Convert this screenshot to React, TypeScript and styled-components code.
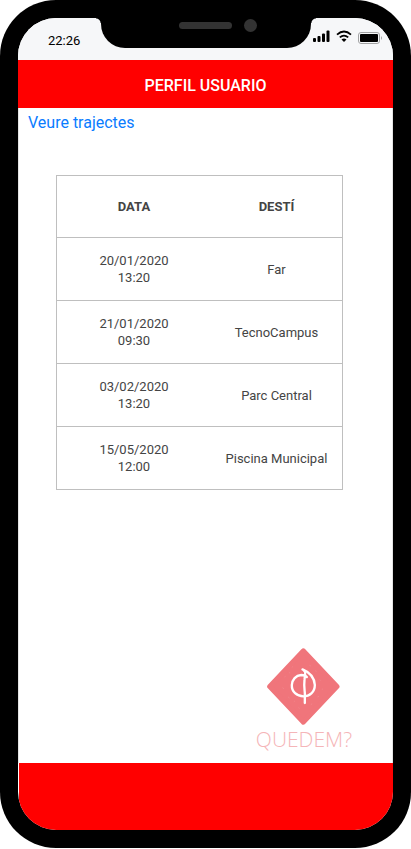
import React from "react";
import styled, { createGlobalStyle } from "styled-components";

const GlobalStyle = createGlobalStyle`
  * { box-sizing: border-box; }
  body { margin: 0; background: #fff; font-family: Roboto, "Liberation Sans", sans-serif; }
`;

const Phone = styled.div`
  display: flex;
  flex-direction: column;
  min-height: calc(100vh - 1px);
  padding: 18px;
  background: #000;
  border-radius: 56px;
`;

const Screen = styled.div`
  flex: 1;
  display: flex;
  flex-direction: column;
  background: #fff;
  border-radius: 38px;
  overflow: hidden;
`;

const StatusBar = styled.div`
  display: grid;
  grid-template-columns: 1fr 210px 1fr;
  height: 42px;
  background: #f6f7f9;
`;

const Clock = styled.time`
  padding: 15px 0 0 30px;
  font-size: 13px;
  line-height: 16px;
  color: #000;
`;

const Notch = styled.div`
  position: relative;
  display: flex;
  justify-content: center;
  height: 30px;
  background: #000;
  border-radius: 0 0 24px 24px;

  &::before,
  &::after {
    content: "";
    position: absolute;
    top: 0;
    width: 5px;
    height: 5px;
  }
  &::before {
    right: 100%;
    background: radial-gradient(circle at 0 100%, transparent 4px, #000 5px);
  }
  &::after {
    left: 100%;
    background: radial-gradient(circle at 100% 100%, transparent 4px, #000 5px);
  }
`;

const Speaker = styled.span`
  width: 53px;
  height: 7px;
  margin: 4px 12px 0 25px;
  border-radius: 4px;
  background: #333;
`;

const Camera = styled.span`
  width: 13px;
  height: 13px;
  margin-top: 1px;
  border-radius: 50%;
  background: #333;
`;

const Indicators = styled.div`
  display: flex;
  align-items: flex-start;
  gap: 6px;
  padding: 12px 0 0 2px;
`;

const TitleBar = styled.header`
  display: flex;
  align-items: center;
  justify-content: center;
  height: 48px;
  padding-top: 4px;
  background: #f00;
`;

const Title = styled.h1`
  margin: 0;
  font-size: 16px;
  font-weight: 500;
  line-height: 20px;
  color: #fff;
`;

const Content = styled.main`
  flex: 1;
  display: flex;
  flex-direction: column;
  align-items: flex-start;
  border: 0 solid #e4e4e4;
  border-width: 0 1px;
  padding: 5px 40px 10px 9px;
`;

const TripsLink = styled.a`
  font-size: 16px;
  line-height: 20px;
  color: #0a7cff;
  text-decoration: none;
`;

const Trips = styled.table`
  align-self: stretch;
  margin: 42px 9px 24px 28px;
  border-collapse: collapse;
  table-layout: fixed;
  border: 1px solid #bfbfbf;
  font-size: 13px;
  line-height: 17px;
  color: #444;
  text-align: center;
`;

const Row = styled.tr`
  border-top: 1px solid #bfbfbf;
`;

const HeadCell = styled.th<{ $width: string }>`
  width: ${(p) => p.$width};
  height: 62px;
  padding: 0;
  font-weight: 700;
`;

const Cell = styled.td`
  height: 63px;
  padding: 0;
`;

const Line = styled.span`
  display: block;
`;

const Brand = styled.div`
  display: flex;
  flex-direction: column;
  align-items: center;
  align-self: flex-end;
  margin-top: auto;
`;

const BrandName = styled.span`
  font-family: "Open Sans", "Noto Sans", sans-serif;
  font-size: 21px;
  font-weight: 300;
  line-height: 28px;
  color: #f5b5b8;
`;

const BottomBar = styled.footer`
  height: 67px;
  margin-left: 1px;
  background: #f00;
`;

const SignalIcon = () => (
  <svg width="17" height="12" viewBox="0 0 17 12" aria-hidden="true">
    <rect x="0" y="8" width="3" height="4" rx="1" />
    <rect x="4.5" y="6" width="3" height="6" rx="1" />
    <rect x="9" y="3.5" width="3" height="8.5" rx="1" />
    <rect x="13.5" y="0.5" width="3" height="11.5" rx="1" />
  </svg>
);

const WifiIcon = () => (
  <svg width="16" height="12" viewBox="0 0 16 12" aria-hidden="true">
    <path d="M1 4.6Q8 -1.6 15 4.6M3.8 7.4Q8 3.8 12.2 7.4" fill="none" stroke="#000" strokeWidth="1.8" />
    <path d="M8 12L5.500 9.4Q8 7.6 10.500 9.4Z" />
  </svg>
);

const BatteryIcon = () => (
  <svg width="25" height="14" viewBox="0 0 25 14" aria-hidden="true">
    <rect x="0.5" y="2.5" width="21" height="11" rx="2.5" fill="none" stroke="#a2a3a4" />
    <rect x="2" y="4" width="18" height="8" rx="1" />
    <path d="M23 6Q25 8 23 10Z" fill="#a2a3a4" />
  </svg>
);

const BrandMark = () => (
  <svg width="73" height="77" viewBox="80 37 218 231" aria-hidden="true">
    <path
      d="M188.500 46L289 152.500L188.500 259L88 152.500Z"
      fill="#f0757b"
      stroke="#f0757b"
      strokeWidth="16"
      strokeLinejoin="round"
    />
    <g fill="none" stroke="#fff" strokeLinecap="round" strokeLinejoin="round">
      <path d="M186 101C208 110 222 126 223 148C223 170 207 182 189 182C169 182 153 168 154 148C155 132 166 119 182 118C190 118 196 120 199 124" strokeWidth="7" />
      <path d="M191 105C197 108 193 120 192 132C190 150 192 160 193 172L193 202" strokeWidth="7" />
    </g>
    <path
      d="M132 124L135 122M146 111L149 112M154 95L157 93M207 89L211 91M224 105L228 107M238 132L241 135M126 156L130 159M143 184L147 187M160 198L163 196M211 207L215 204M231 184L235 182M244 161L247 160M174 216L177 218"
      fill="none"
      stroke="#f28d92"
      strokeWidth="2"
    />
  </svg>
);

const trips = [
  { date: "20/01/2020", time: "13:20", place: "Far" },
  { date: "21/01/2020", time: "09:30", place: "TecnoCampus" },
  { date: "03/02/2020", time: "13:20", place: "Parc Central" },
  { date: "15/05/2020", time: "12:00", place: "Piscina Municipal" },
];

export default function App() {
  return (
    <>
      <GlobalStyle />
      <Phone>
        <Screen>
          <StatusBar>
            <Clock>22:26</Clock>
            <Notch>
              <Speaker />
              <Camera />
            </Notch>
            <Indicators>
              <SignalIcon />
              <WifiIcon />
              <BatteryIcon />
            </Indicators>
          </StatusBar>
          <TitleBar>
            <Title>PERFIL USUARIO</Title>
          </TitleBar>
          <Content>
            <TripsLink href="#trajectes">Veure trajectes</TripsLink>
            <Trips id="trajectes">
              <thead>
                <Row>
                  <HeadCell scope="col" $width="54%">DATA</HeadCell>
                  <HeadCell scope="col" $width="46%">DESTÍ</HeadCell>
                </Row>
              </thead>
              <tbody>
                {trips.map((trip) => (
                  <Row key={trip.date}>
                    <Cell>
                      <Line>{trip.date}</Line>
                      <Line>{trip.time}</Line>
                    </Cell>
                    <Cell>{trip.place}</Cell>
                  </Row>
                ))}
              </tbody>
            </Trips>
            <Brand>
              <BrandMark />
              <BrandName>QUEDEM?</BrandName>
            </Brand>
          </Content>
          <BottomBar />
        </Screen>
      </Phone>
    </>
  );
}
